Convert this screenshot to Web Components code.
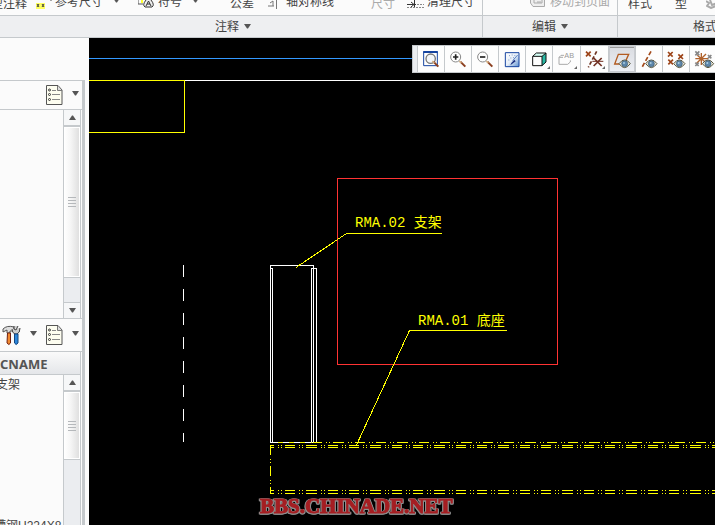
<!DOCTYPE html>
<html lang="zh-CN">
<head>
<meta charset="utf-8">
<title>工程图</title>
<style>
html,body{height:100%;margin:0}
body{font:12px/14px "Liberation Sans","Noto Sans CJK SC",sans-serif;color:#444;background:#fbfbfb;overflow:hidden;
 --line:#c5c9cc;--panel:#fbfbfb;--track:#ebedf0}
</style>
</head>
<body>
<cad-app></cad-app>
<script>
const define=(name,html,setup)=>customElements.define(name,class extends HTMLElement{
  connectedCallback(){
    if(this.shadowRoot)return;
    const t=document.createElement('template');
    t.innerHTML=html;
    this.attachShadow({mode:'open'}).append(t.content.cloneNode(true));
    if(setup)setup(this,this.shadowRoot);
  }
});

/* Small triangle for drop-downs and scroll buttons */
define('cad-arrow',`<style>:host{display:inline-block;line-height:0;color:#555}:host([up]){transform:rotate(180deg)}svg{display:block}</style>
<svg width="7" height="5" aria-hidden="true"><path d="M0 0H7L4 4.500H3Z" fill="currentColor"/></svg>`);

define('ribbon-command',`<style>
:host{display:block;height:15px;overflow:hidden}
button{display:flex;align-items:flex-end;width:100%;height:11px;padding:0;border:0;background:none;font:inherit;color:#444;white-space:nowrap}
:host([raised]) button{height:9px}
:host([end]) button{justify-content:flex-end}
:host([off]) button{color:#aaa}
.text{line-height:14px}
cad-arrow{margin-left:10px;margin-bottom:6px}
::slotted(svg){flex:none;display:block}
</style><button type="button"><slot name="icon"></slot><span class="text"><slot></slot></span></button>`,(h,r)=>{
  if(h.hasAttribute('menu'))r.querySelector('button').append(document.createElement('cad-arrow'));
  if(h.hasAttribute('off'))r.querySelector('button').disabled=true;
});

define('ribbon-group',`<style>
:host{display:grid;grid-template-rows:15px 21px;min-width:0;border-right:1px solid var(--line)}
:host(:last-of-type){border-right:0}
.commands{display:grid;grid-template-columns:var(--cols);border-bottom:1px solid var(--line);overflow:hidden}
.title{display:flex;align-items:center;justify-content:center;gap:5px;padding:1px 0 0;border:0;background:#eeeff1;font:inherit;color:#444;white-space:nowrap}
:host([wide]) .title{padding-right:16px}
:host([cut]) .title{justify-content:flex-start;padding-left:75px}
.title cad-arrow{margin-bottom:2px}
</style><div class="commands"><slot></slot></div><button class="title" type="button"><span></span><cad-arrow></cad-arrow></button>`,(h,r)=>{
  r.querySelector('.title span').textContent=h.getAttribute('label');
});

define('cad-ribbon',`<style>
:host{display:grid;grid-template-columns:483fr 135fr 97fr;grid-template-rows:37px;border-bottom:1px solid var(--line);background:var(--panel)}
ribbon-group{grid-template-rows:16px 21px}
</style>
<ribbon-group wide label="注释" style="--cols:36px 102px 92px 38px 103px 36px 1fr">
 <ribbon-command end style="padding-right:9px">型注释</ribbon-command>
 <ribbon-command raised menu><svg slot="icon" width="19" height="9" aria-hidden="true"><path d="M0 3H9V9H0Z" fill="#ffff60"/><path d="M1 4L3 7M3 4L1 7M6 4L8 7M8 4L6 7" stroke="#444"/><path d="M14 0h2" stroke="#555"/></svg>参考尺寸</ribbon-command>
 <ribbon-command raised menu><svg slot="icon" width="20" height="9" aria-hidden="true"><path d="M0 0V4H5" stroke="#555" fill="none"/><path d="M3 0H5V3H3Z" fill="#ffff30"/><path d="M8 0Q4 5 7 7H14Q17 5 13 0" fill="#eee" stroke="#333"/><path d="M8 6L10.500 1L13 6M9 4H12" stroke="#333" fill="none"/></svg>符号</ribbon-command>
 <ribbon-command>公差</ribbon-command>
 <ribbon-command raised><svg slot="icon" width="18" height="9" aria-hidden="true"><path d="M0 6H6M2 3L5 1V6M8.500 0V9" stroke="#777" fill="none"/></svg>轴对称线</ribbon-command>
 <ribbon-command off>尺寸</ribbon-command>
 <ribbon-command raised><svg slot="icon" width="20" height="9" aria-hidden="true"><path d="M0 4.500H9M7.500 0V8M4 2L7 4.500L4 7" stroke="#333" fill="none"/><path d="M10 4.500H17M0 7.500H17" stroke="#888" stroke-dasharray="2 1"/></svg>清理尺寸</ribbon-command>
</ribbon-group>
<ribbon-group label="编辑" style="--cols:47px 1fr">
 <span></span>
 <ribbon-command raised off><svg slot="icon" width="20" height="9" aria-hidden="true"><path d="M.5 0V3L3 6.500H14.500V0M4 0V3H12V0M7 2H11" stroke="#aaa" fill="#eee"/></svg>移动到页面</ribbon-command>
</ribbon-group>
<ribbon-group cut label="格式" style="--cols:10px 47px 31px 1fr">
 <span></span>
 <ribbon-command>样式</ribbon-command>
 <ribbon-command>型</ribbon-command>
 <ribbon-command raised><svg slot="icon" width="12" height="9" aria-hidden="true"><path d="M0 1L3 3L1 6L5 8L10 6M4 0L6 5L11 3" stroke="#aaa" stroke-width="2" fill="none"/></svg></ribbon-command>
</ribbon-group>`);

define('cad-scrollbar',`<style>
:host{display:flex;flex-direction:column;box-sizing:border-box;width:18px;margin-right:1px;border:solid var(--line);border-width:0 1px;background:var(--track)}
button{display:grid;place-items:center;flex:0 0 16px;padding:0;border:0;background:#f6f7f8}
.up{border-bottom:1px solid var(--line)}.down{border-top:1px solid var(--line)}
.thumb{flex:var(--thumb) 1 0;border:1px solid var(--line);border-width:1px 0;box-shadow:inset 0 0 0 1px #fff;background:linear-gradient(90deg,#fff,#f6f6f6 40%,#ddd);display:grid;place-items:center}
.rest{flex:var(--rest) 1 0}
</style><button class="up" type="button" aria-label="向上滚动"><cad-arrow up></cad-arrow></button>
<div class="thumb"><svg width="8" height="12" aria-hidden="true"><path d="M0 1.500H8M0 4.500H8M0 7.500H8M0 10.500H8" stroke="#b5b8bb"/></svg></div><div class="rest"></div>
<button class="down" type="button" aria-label="向下滚动"><cad-arrow></cad-arrow></button>`,(h,r)=>{
  if(h.hasAttribute('cut'))r.querySelector('.down').remove();
});

define('menu-button',`<style>
:host{display:block}button{display:flex;align-items:center;gap:9px;padding:0;border:0;background:none}
cad-arrow{margin-bottom:3px}
</style><button type="button"><slot></slot><cad-arrow></cad-arrow></button>`,(h,r)=>{
  r.querySelector('button').setAttribute('aria-label',h.getAttribute('label'));
});

const listIcon='<svg width="17" height="20" aria-hidden="true"><path d="M.5 .5H12L16 5V19.500H.5Z" fill="#fdfdf0" stroke="#555"/><path d="M11.500 1V5.500H16" fill="#ddd" stroke="#777"/><path d="M6 5.500H10M6 9.500H14M6 14.500H14" stroke="#888"/><g fill="none" stroke="#333"><circle cx="3.500" cy="5" r="1"/><circle cx="3.500" cy="9.500" r="1"/><circle cx="3.500" cy="14.500" r="1"/></g></svg>';

define('cad-sidebar',`<style>
:host{display:flex;flex-direction:column;background:var(--panel);padding:42px 4px 0 0;min-height:0}
.frame{flex:1;display:flex;flex-direction:column;min-height:0;border:solid var(--line);border-width:1px 3px 0 0}
.tools{display:flex;align-items:center;justify-content:flex-end;gap:9px;padding-right:3px;border-bottom:1px solid var(--line);height:28px}
.tools.lower{height:32px;border-top:1px solid var(--line)}
.list{display:flex;justify-content:space-between;min-height:0}
.upper{flex:208 1 0}.bottom{flex:150 1 0;overflow:hidden}
.title{height:23px;display:flex;align-items:center;border:solid var(--line);border-width:0 1px 1px 0;background:linear-gradient(#fafafa,#e4e6e9);font:bold 13px/18px "Noto Sans",sans-serif;color:#555;margin-right:1px;padding-top:1px;box-sizing:border-box}
.rows{flex:1;min-width:0;overflow:hidden;display:flex;flex-direction:column;justify-content:space-between}
.rows div{white-space:nowrap;line-height:20px;color:#444}
.rows .last{height:8px;line-height:18px;margin-left:-6px}
.first{margin-left:-4px}
</style>
<div class="frame">
 <div class="tools"><menu-button label="设置">${listIcon}</menu-button></div>
 <div class="list upper"><span></span><cad-scrollbar style="--thumb:150;--rest:24"></cad-scrollbar></div>
 <div class="tools lower">
  <menu-button label="工具"><svg width="19" height="21" aria-hidden="true"><path d="M1 4Q5 0 12 2V6H8V8H5V5L1 7Z" fill="#ddd" stroke="#555"/><path d="M5.500 8H8.500V18Q7 21 5 18Z" fill="#f28a30" stroke="#702010"/><path d="M12 1V4L14 5L16 1M18 3Q18 8 15 9H13Q10 8 10 4" fill="#ccc" stroke="#444"/><path d="M12.500 9H16V18Q14 21 12.500 18Z" fill="#2c87db" stroke="#154680"/></svg></menu-button>
  <menu-button label="设置">${listIcon}</menu-button>
 </div>
 <div class="title" role="columnheader">CNAME</div>
 <div class="list bottom">
  <div class="rows"><div class="first">支架</div><div class="last">槽钢U224X8</div></div>
  <cad-scrollbar cut style="--thumb:68;--rest:65"></cad-scrollbar>
 </div>
</div>`);

const X=(x,y,r,c='#9c4318')=>`<path d="M${x-r} ${y-r}L${x+r} ${y+r}M${x+r} ${y-r}L${x-r} ${y+r}" stroke="${c}" stroke-width="5" fill="none"/>`;
const eye=(x,y)=>`<g transform="translate(${x} ${y})"><path d="M-17 0Q-8 -12 0 -11Q8 -12 17 0Q8 12 0 12Q-8 12 -17 0Z" fill="#eee9d8" stroke="#555540" stroke-width="3"/><circle r="9" fill="#5d87ab" stroke="#38566f" stroke-width="2"/><circle cx="-2" cy="-2" r="3" fill="#a9cce0"/></g>`;
const corner='<path d="M72 60V69H63Z" fill="#666"/>';
const handle='<path d="M46 47L61 62" stroke="#8c4020" stroke-width="6"/><path d="M43 45L49 51" stroke="#d6b080" stroke-width="4"/>';
const views=[
 ['重新调整',`<path d="M17 17H58V59H17Z" fill="#fff" stroke="#1644a0" stroke-width="3"/><path d="M16 18H59" stroke="#1644a0" stroke-width="6"/><circle cx="38" cy="38" r="14" fill="#f4f7fa" stroke="#777" stroke-width="4"/>${handle}`],
 ['放大',`<circle cx="32" cy="33" r="15" fill="#fff" stroke="#888" stroke-width="3"/><path d="M24 33H40M32 25V41" stroke="#222" stroke-width="5"/>${handle}`],
 ['缩小',`<circle cx="32" cy="33" r="15" fill="#fff" stroke="#888" stroke-width="3"/><path d="M24 33H40" stroke="#222" stroke-width="5"/>${handle}`],
 ['重画',`<defs><linearGradient id="g" x2="1" y2="1"><stop stop-color="#fff"/><stop offset=".5" stop-color="#e6eef8"/><stop offset="1" stop-color="#5b8fd0"/></linearGradient></defs><path d="M19 20H60V62H19Z" fill="url(#g)" stroke="#1644a0" stroke-width="3"/><path d="M56 27L41 44" stroke="#5b83c4" stroke-width="3"/><path d="M46 41L50 46L34 58L37 51Z" fill="#1b2f80"/><path d="M30 29h3M38 27h3M46 29h3M34 36h3M42 35h3M28 42h3" stroke="#7d9ac8" stroke-width="3"/>`],
 ['显示样式',`<path d="M20 31L31 21H60L48 31Z" fill="#d5fff6"/><path d="M48 31L60 21V48L48 59Z" fill="#28b8a4"/><path d="M20 31H48V59H20ZM20 31L31 21H60V48L48 59M48 31L60 21" fill="none" stroke="#111" stroke-width="3"/>${corner}`],
 ['已保存方向',`<path d="M33 28H24L18 34V55H44L52 48V43M18 34H30" fill="none" stroke="#aaa" stroke-width="3"/><text x="34" y="37" font-size="22" font-family="Liberation Sans,sans-serif" fill="#999">AB</text>${corner}`],
 ['基准显示',X(22,24,7)+`<path d="M47 16L22 64" stroke="#6d3423" stroke-width="5" stroke-dasharray="11 6"/>`+X(50,48,12,'#713022')+'<path d="M34 46H67" stroke="#713022" stroke-width="3"/>'+corner],
 ['平面显示',`<path d="M28 25H59L46 54H17Z" fill="none" stroke="#b35b20" stroke-width="4"/>${eye(47,53)}`],
 ['轴显示',`<path d="M45 16L18 64" stroke="#a34a1b" stroke-width="5" stroke-dasharray="13 7"/>${eye(46,53)}`],
 ['点显示',X(22,25,7)+X(53,32,7)+X(23,48,7)+eye(49,53)],
 ['坐标系显示',`<path d="M34 21V57M16 38H54M22 28L48 50M48 24L20 52" stroke="#b0622c" stroke-width="4"/>`+X(22,22,6,'#888')+X(59,32,5,'#888')+X(21,55,5,'#888')+eye(54,53)]
];
define('view-toolbar',`<style>
:host{display:flex;height:28px;overflow:hidden;background:#fdfdfd;border:solid var(--line);border-width:1px 0 1px 1px;box-sizing:border-box}
.grip{flex:0 0 4px;background:#ebedf0}
button{flex:0 0 27px;box-sizing:border-box;padding:0;border:0;border-left:1px solid var(--line);background:none}
button.wide{flex-basis:28px}
button[aria-pressed]{background:linear-gradient(#d9dbe0,#eef0f5);box-shadow:inset 0 0 0 1px #c9cbd0,inset 0 2px 0 #999}
svg{display:block}
</style><span class="grip"></span>`+views.map(([n,s],i)=>`<button type="button" aria-label="${n}"${i==7?' aria-pressed="true"':''} class="${i==5||i==6?'wide':''}"><svg width="26" height="26" viewBox="0 0 78 78" aria-hidden="true">${s}</svg></button>`).join(''));

/* Drawing sheet: model geometry, balloons and leaders on a free canvas */
define('cad-canvas',`<style>
:host{display:block;position:relative;background:#000;overflow:hidden;min-width:0}
.sheet{display:block;width:100%;height:100%}
view-toolbar{position:absolute;top:7px;left:323px;right:0}
.geo{shape-rendering:crispEdges;fill:none;stroke-width:1}
.y{stroke:#ff0}.w{stroke:#fff}.r{stroke:#f33}.b{stroke:#39f}
.phantom{stroke-dasharray:10 4 1 2 1 3 10 4 1 2 1 3 11 4 1 2 1 3}
.note{font:14px "Liberation Mono","Noto Sans CJK SC",monospace;fill:#ff0;white-space:pre}
.mark{font:bold 21px "Liberation Serif",serif;fill:#a51e22;stroke:#a51e22;stroke-width:1px;
 filter:drop-shadow(1px 0 #8c8c8c) drop-shadow(-1px 0 #8c8c8c) drop-shadow(0 1px #8c8c8c)}
</style>
<svg class="sheet"><g class="geo" transform="translate(-89 -38)">
<path class="w" d="M185 80.500H6000"/><path class="b" d="M89 58.500H6000"/>
<path class="y" d="M89 80.500H184.500V132.500H89"/>
<path class="w" d="M183.500 265V442" stroke-dasharray="12 12"/>
<path class="r" d="M337.500 178.500H557.500V364.500H337.500Z"/>
<path class="w" d="M270.500 442.500V265.500H313.500V442M270 268.500H272.500V442M311.500 442V268.500H316.500V442.500H270"/>
<path class="y" d="M278 442.500H312" stroke-dasharray="5 6"/>
<path class="y phantom" d="M313 442.500H6000" stroke-dashoffset="22"/>
<path class="y phantom" d="M270 445.500H6000" stroke-dashoffset="6"/><path class="y phantom" d="M270 447.500H6000" stroke-dashoffset="6"/>
<path class="y phantom" d="M270 490.500H6000" stroke-dashoffset="6"/><path class="y phantom" d="M270 493.500H6000" stroke-dashoffset="6"/>
<path class="y phantom" d="M270.500 445V494"/>
<path class="y" d="M296 267.500L346.500 233.500H442M299 265L303 263"/>
<path class="y" d="M356.500 445L409.500 330.500H507M358 442L360 437"/>
</g><g transform="translate(-89 -38)">
<text class="note" x="355" y="227">RMA.02 支架</text>
<text class="note" x="418" y="325">RMA.01 底座</text>
<text class="mark" x="260" y="513">BBS.CHINADE.NET</text>
</g></svg>
<view-toolbar></view-toolbar>`);

define('cad-app',`<style>
:host{display:grid;height:100vh;grid-template:auto minmax(0,1fr)/89px minmax(0,1fr)}
cad-ribbon{grid-column:1/-1}
</style><cad-ribbon></cad-ribbon><cad-sidebar></cad-sidebar><cad-canvas></cad-canvas>`);
</script>
</body>
</html>
